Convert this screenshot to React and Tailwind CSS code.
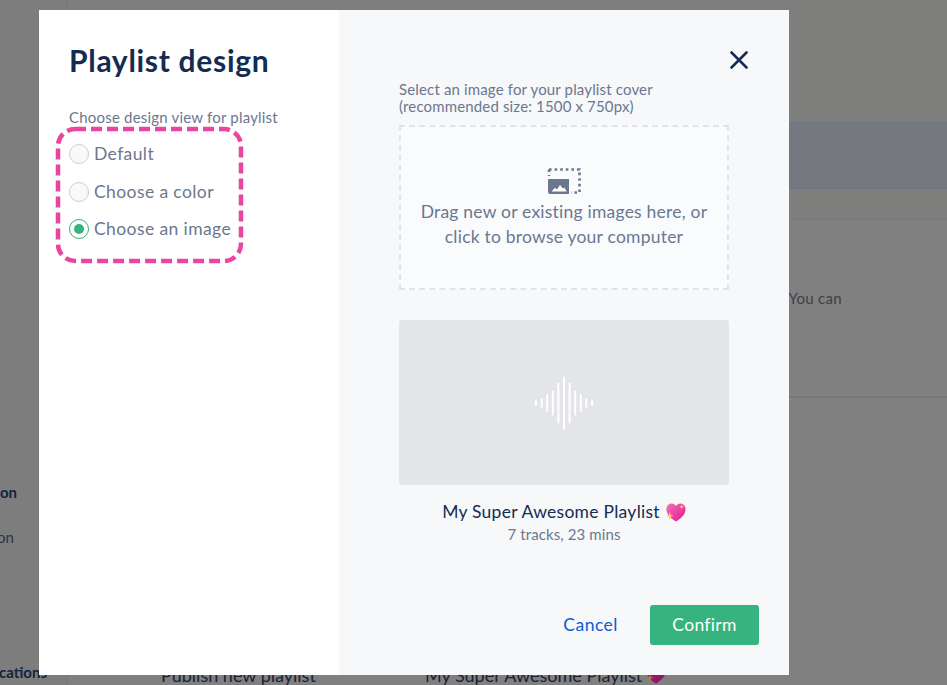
import React from "react";

const font = { fontFamily: '"Lato", "Liberation Sans", sans-serif' };

function Radio({ label, checked }) {
  return (
    <div className="flex items-center h-[20px] gap-[5px]">
      {checked ? (
        <span className="w-[20px] h-[20px] rounded-full border border-[#36b37e] bg-white flex items-center justify-center">
          <span className="w-[10px] h-[10px] rounded-full bg-[#36b37e]" />
        </span>
      ) : (
        <span className="w-[20px] h-[20px] rounded-full border border-[#c9ced8] bg-[#f8f9fb]" />
      )}
      <span className="text-[17.500px] leading-[20px] text-[#6b7790] tracking-[0.4px]">{label}</span>
    </div>
  );
}

function ImageIcon() {
  return (
    <svg width="34" height="28" viewBox="0 0 34 28" className="block">
      <path d="M2 2.500H32.500V25.500H24" fill="none" stroke="#6b7790" strokeWidth="2.600" strokeDasharray="2.600 3" />
      <path d="M2 2.500V9" fill="none" stroke="#6b7790" strokeWidth="2.600" strokeDasharray="2.600 3" />
      <path d="M1 13a1 1 0 0 1 1-1h20v15H3a2 2 0 0 1-2-2z" fill="#6b7790" />
      <path d="M4.500 24.500l3.500-3.800 2 1.800 3-4.500 3 3.400 1.300-1 2.500 4.100z" fill="#fff" />
    </svg>
  );
}

function Wave() {
  const hs = [6, 10, 18, 25, 41, 53, 41, 25, 18, 10, 6];
  return (
    <svg width="60" height="54" viewBox="0 0 60 54" className="block">
      {hs.map((h, i) => (
        <rect key={i} x={2 + i * 5.6 - 1} y={27 - h / 2} width="2" height={h} rx="1" fill="#ffffff" />
      ))}
    </svg>
  );
}

function Heart({ id = "hg", from = "#f56fb8", to = "#e3178f", star = "#fbd54a" }) {
  return (
    <svg width="21" height="21" viewBox="0 0 22 22" className="block">
      <defs>
        <linearGradient id={id} x1="0" y1="0" x2="1" y2="1">
          <stop offset="0" stopColor={from} />
          <stop offset="1" stopColor={to} />
        </linearGradient>
      </defs>
      <path d="M11.500 20.500C7 17.500 1.500 13.500 1.500 7.500 1.500 4 4 1.500 7 1.500c2 0 3.500 1 4.500 2.700C12.500 2.500 14 1.500 16 1.500c3 0 5.500 2.500 5.500 6 0 6-5.500 10-10 13z" fill={`url(#${id})`} />
      <path d="M5 10.500l1 3 3 1-3 1-1 3.300-1-3.300-3-1 3-1z" fill={star} />
      <path d="M17.500 2.500l.7 1.800 1.800.7-1.800.7-.7 1.800-.7-1.800-1.800-.7 1.800-.7z" fill={star} />
    </svg>
  );
}

function Background() {
  return (
    <div className="flex h-[685px] bg-[#7e7f7d] text-[#2c3138] overflow-hidden">
      <div className="w-[68px] shrink-0 flex flex-col bg-[#7c7d7c] border-r border-[#747574]">
        <div className="h-[482px]" />
        <div className="w-[17px] flex justify-end text-[15px] leading-[20px] font-bold text-[#142340] whitespace-nowrap">Publication</div>
        <div className="h-[25px]" />
        <div className="w-[14px] flex justify-end text-[15px] leading-[20px] text-[#30353d] whitespace-nowrap">Publication</div>
        <div className="h-[115px]" />
        <div className="w-[47px] flex justify-end text-[15px] leading-[20px] font-bold text-[#142340] whitespace-nowrap">Notifications</div>
      </div>
      <div className="flex-1 flex flex-col min-w-0">
        <div className="h-[122px] shrink-0" />
        <div className="h-[67px] shrink-0 bg-[#75787e] border-y border-[#6c7488]" />
        <div className="h-[30px] shrink-0" />
        <div className="h-[179px] shrink-0 bg-[#808080] border-t border-[#787978] flex flex-col items-end pr-[105px] pt-[68px] border-b-2 border-b-[#767776]">
          <span className="text-[15px] leading-[20px] tracking-[0.3px] text-[#3c4047]">You can</span>
        </div>
        <div className="flex-1 bg-[#808080] flex flex-col justify-end">
          <div className="flex text-[18px] leading-[20px] text-[#1a2233] pl-[93px]">
            <span className="w-[264px]">Publish new playlist</span>
            <span>My Super Awesome Playlist</span>
            <span className="ml-[3px] mt-[-1px]">
              <Heart id="hg2" from="#a5246f" to="#8a0f5c" star="#a78a2e" />
            </span>
          </div>
        </div>
      </div>
    </div>
  );
}

export default function App() {
  return (
    <div className="relative w-[947px] h-[685px] overflow-hidden" style={font}>
      <Background />
      <div className="absolute left-[39px] top-[10px] w-[750px] h-[665px] flex">
        <div className="w-[300px] bg-white pl-[30px] pt-[31px] flex flex-col">
          <h1 className="text-[30px] leading-[38px] font-bold text-[#142c51] tracking-[0.7px]">Playlist design</h1>
          <p className="mt-[29px] text-[15px] leading-[18px] text-[#6b7790] tracking-[0.2px]">Choose design view for playlist</p>
          <div className="mt-[18px] flex flex-col gap-[17.500px]">
            <Radio label="Default" />
            <Radio label="Choose a color" />
            <Radio label="Choose an image" checked />
          </div>
        </div>
        <div className="flex-1 bg-[#f7f8fa] relative pl-[60px] pr-[30px] pt-[71px] flex flex-col">
          <button className="absolute right-[39px] top-[39px] text-[#142c51]">
            <svg width="22" height="22" viewBox="0 0 22 22" className="block">
              <path d="M3.500 3.500L18.500 18.500M18.500 3.500L3.500 18.500" stroke="currentColor" strokeWidth="2.600" strokeLinecap="round" />
            </svg>
          </button>
          <p className="w-[330px] text-[15px] leading-[17px] text-[#6b7790] tracking-[0.15px]">
            Select an image for your playlist cover<br />(recommended size: 1500 x 750px)
          </p>
          <div className="mt-[10px] w-[330px] h-[165px] border-2 border-dashed border-[#e2e3e6] bg-[#fafbfd] flex flex-col items-center pt-[40px]">
            <ImageIcon />
            <p className="mt-[4px] text-center text-[17.500px] leading-[25px] text-[#6b7790] tracking-[0.22px]">
              Drag new or existing images here, or<br />click to browse your computer
            </p>
          </div>
          <div className="mt-[30px] w-[330px] h-[165px] rounded-[3px] bg-[#e4e5e9] flex items-center justify-center">
            <Wave />
          </div>
          <div className="mt-[15px] w-[330px] flex items-center justify-center gap-[5px]">
            <span className="text-[17.500px] leading-[24px] text-[#142c51] tracking-[0.26px]">My Super Awesome Playlist</span>
            <Heart />
          </div>
          <p className="w-[330px] text-center text-[15px] leading-[20px] text-[#6b7790] tracking-[0.1px]">7 tracks, 23 mins</p>
          <div className="mt-auto mb-[30px] flex items-center justify-end gap-[32px]">
            <span className="text-[17.500px] text-[#0c5bd6] tracking-[0.5px]">Cancel</span>
            <button className="w-[109px] h-[40px] rounded-[3px] bg-[#36b37e] text-white text-[17.500px] tracking-[0.3px]">Confirm</button>
          </div>
        </div>
      </div>
      <svg className="absolute left-[54px] top-[125px] pointer-events-none" width="192" height="140" viewBox="0 0 192 140">
        <rect x="4" y="4" width="183" height="132" rx="17" fill="none" stroke="#ec459f" strokeWidth="4.500" strokeDasharray="11 5" />
      </svg>
    </div>
  );
}
